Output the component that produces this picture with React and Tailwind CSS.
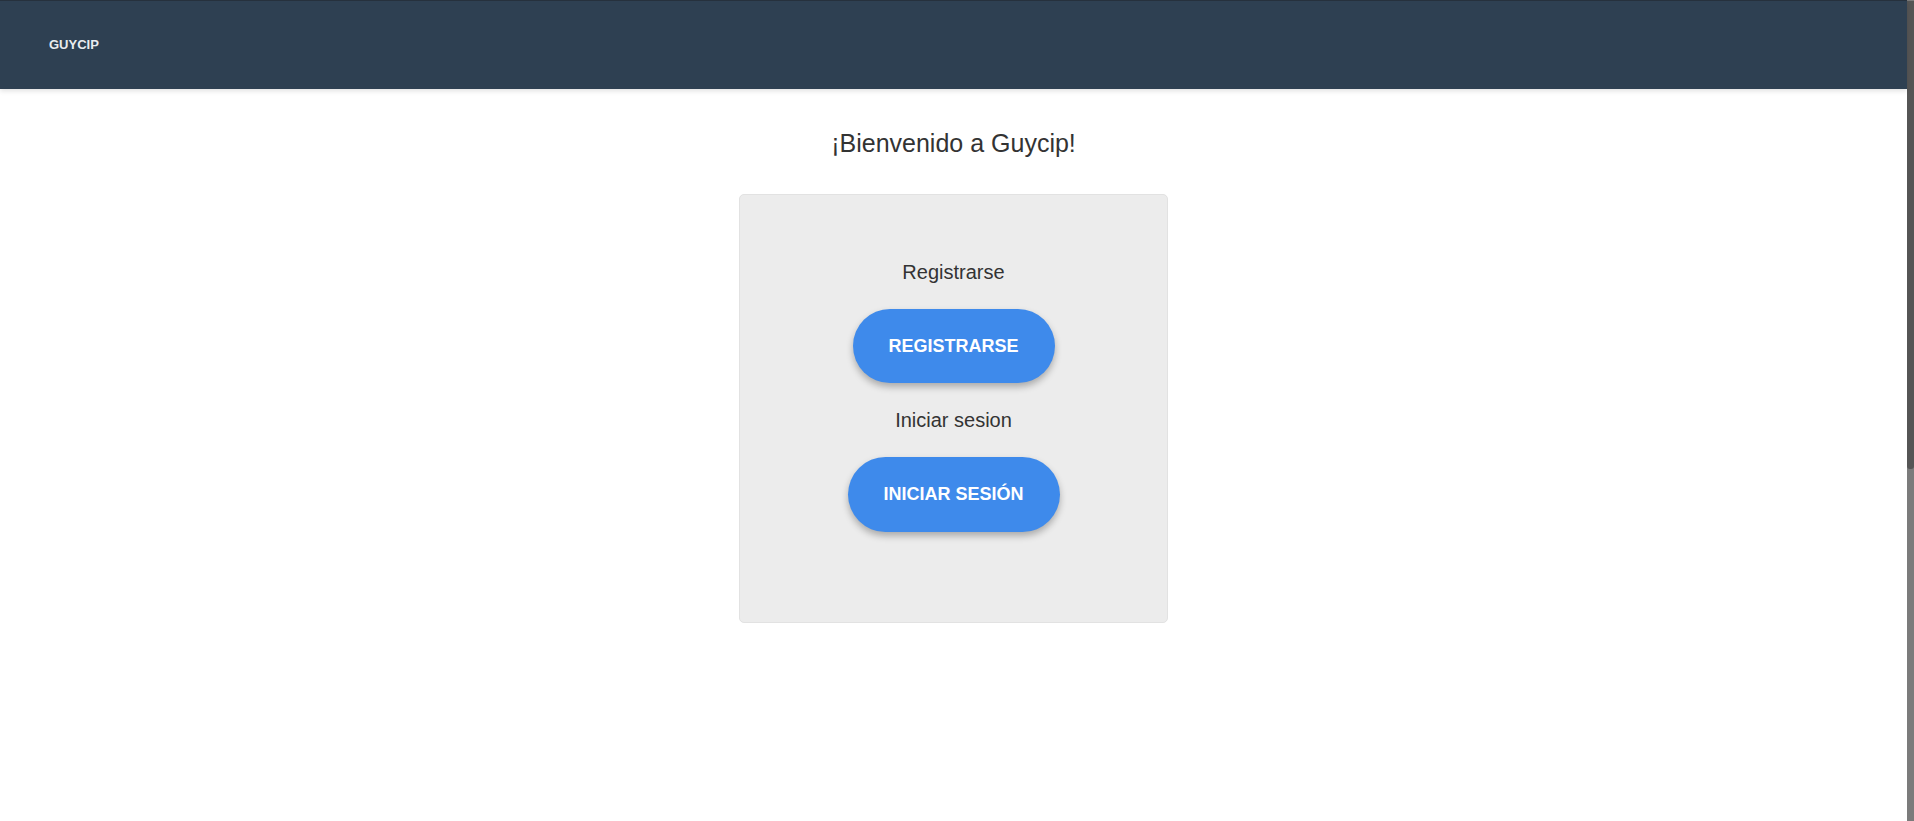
export default function App() {
  const font = { fontFamily: '"Liberation Sans", Arial, sans-serif' };
  return (
    <div className="flex h-[821px] w-full bg-white overflow-hidden" style={font}>
      <div className="flex flex-1 flex-col">
        <header className="relative z-10 flex h-[89px] items-center border-t border-[#26313d] bg-[#2e4052] pl-[49px] shadow-[0_2px_5px_rgba(0,0,0,0.12)]">
          <span className="text-[13px] font-bold text-[#e9ecef]">GUYCIP</span>
        </header>
        <main className="flex flex-col items-center pt-[40px]">
          <h1 className="text-[25px] leading-[28px] text-[#333333]">¡Bienvenido a Guycip!</h1>
          <div className="mt-[37px] flex h-[429px] w-[429px] flex-col items-center rounded-[5px] border border-[#e2e2e2] bg-[#ececec] pt-[66px]">
            <p className="text-[20px] leading-[23px] text-[#333333]">Registrarse</p>
            <button className="mt-[25px] flex h-[74px] w-[202px] items-center justify-center rounded-full bg-[#3e8aeb] text-[18px] font-bold text-white shadow-[0_4px_7px_rgba(0,0,0,0.28)]">
              REGISTRARSE
            </button>
            <p className="mt-[26px] text-[20px] leading-[23px] text-[#333333]">Iniciar sesion</p>
            <button className="mt-[25px] flex h-[75px] w-[212px] items-center justify-center rounded-full bg-[#3e8aeb] text-[18px] font-bold text-white shadow-[0_4px_7px_rgba(0,0,0,0.28)]">
              INICIAR SESIÓN
            </button>
          </div>
        </main>
      </div>
      <div className="flex w-[7px] flex-col bg-[#7b7b7b]">
        <div className="mt-[1px] h-[468px] rounded-b-[3px] bg-[#555555]" />
      </div>
    </div>
  );
}
